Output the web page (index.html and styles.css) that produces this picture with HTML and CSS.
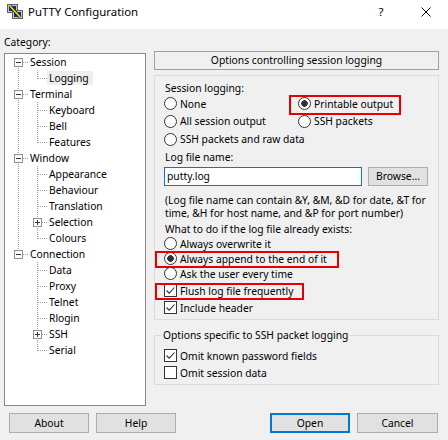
FILE: index.html
```html
<!DOCTYPE html>
<html>
<head>
<meta charset="utf-8">
<link rel="stylesheet" href="styles.css">
</head>
<body>
<div class="titlebar">
  <svg class="appicon" viewBox="0 0 16 16">
    <rect x="0.5" y="0.5" width="10" height="8" fill="#c8c8c8" stroke="#606060"/>
    <rect x="2" y="2" width="7" height="5" fill="#1a2a80"/>
    <rect x="5.5" y="6.5" width="10" height="8" fill="#c8c8c8" stroke="#606060"/>
    <rect x="7" y="8" width="7" height="5" fill="#1a2a80"/>
    <path d="M3 2 L13 13" stroke="#202020" stroke-width="3.2"/>
    <path d="M3 2 L13 13" stroke="#f5e000" stroke-width="1.6"/>
  </svg>
  <span class="title">PuTTY Configuration</span>
  <span class="tb-help">?</span>
  <span class="tb-close"><svg viewBox="0 0 10 10" width="10" height="10"><path d="M0.5 0.5 L9.5 9.5 M9.5 0.5 L0.5 9.5" stroke="#000" stroke-width="1"/></svg></span>
</div>

<div class="main">
  <div class="left">
    <div class="cat">Category:</div>
    <div class="tree">
      <div class="tr"><span class="c bx down"><span class="pm"></span></span><span class="lbl">Session</span></div>
      <div class="tr"><span class="c v"></span><span class="c l"></span><span class="lbl sel">Logging</span></div>
      <div class="tr"><span class="c bx both"><span class="pm"></span></span><span class="lbl">Terminal</span></div>
      <div class="tr"><span class="c v"></span><span class="c t"></span><span class="lbl">Keyboard</span></div>
      <div class="tr"><span class="c v"></span><span class="c t"></span><span class="lbl">Bell</span></div>
      <div class="tr"><span class="c v"></span><span class="c l"></span><span class="lbl">Features</span></div>
      <div class="tr"><span class="c bx both"><span class="pm"></span></span><span class="lbl">Window</span></div>
      <div class="tr"><span class="c v"></span><span class="c t"></span><span class="lbl">Appearance</span></div>
      <div class="tr"><span class="c v"></span><span class="c t"></span><span class="lbl">Behaviour</span></div>
      <div class="tr"><span class="c v"></span><span class="c t"></span><span class="lbl">Translation</span></div>
      <div class="tr"><span class="c v"></span><span class="c bx both"><span class="pm plus"></span></span><span class="lbl">Selection</span></div>
      <div class="tr"><span class="c v"></span><span class="c l"></span><span class="lbl">Colours</span></div>
      <div class="tr"><span class="c bx up"><span class="pm"></span></span><span class="lbl">Connection</span></div>
      <div class="tr"><span class="c"></span><span class="c t"></span><span class="lbl">Data</span></div>
      <div class="tr"><span class="c"></span><span class="c t"></span><span class="lbl">Proxy</span></div>
      <div class="tr"><span class="c"></span><span class="c t"></span><span class="lbl">Telnet</span></div>
      <div class="tr"><span class="c"></span><span class="c t"></span><span class="lbl">Rlogin</span></div>
      <div class="tr"><span class="c"></span><span class="c bx both"><span class="pm plus"></span></span><span class="lbl">SSH</span></div>
      <div class="tr"><span class="c"></span><span class="c l"></span><span class="lbl">Serial</span></div>
    </div>
  </div>

  <div class="right">
    <div class="ptitle">Options controlling session logging</div>
    <div class="group g1">
      <div class="lab13">Session logging:</div>
      <div class="rgrid">
        <label class="opt"><span class="rb"></span>None</label>
        <label class="opt hl hl-print"><span class="rb on"></span>Printable output</label>
        <label class="opt"><span class="rb"></span>All session output</label>
        <label class="opt"><span class="rb"></span>SSH packets</label>
        <label class="opt span2"><span class="rb"></span>SSH packets and raw data</label>
      </div>
      <div class="lab14 mt2">Log file name:</div>
      <div class="filerow">
        <div class="input">putty.log</div>
        <div class="btn browse">Browse...</div>
      </div>
      <div class="para">(Log file name can contain &amp;Y, &amp;M, &amp;D for date, &amp;T for<br>time, &amp;H for host name, and &amp;P for port number)</div>
      <div class="lab14 mt2">What to do if the log file already exists:</div>
      <div class="r15"><label class="opt"><span class="rb"></span>Always overwrite it</label></div>
      <div class="r15"><label class="opt hl hl-append"><span class="rb on"></span>Always append to the end of it</label></div>
      <div class="r15"><label class="opt"><span class="rb"></span>Ask the user every time</label></div>
      <div class="r17 mt1"><label class="opt hl hl-flush"><span class="cb on"><svg viewBox="0 0 11 11" width="11" height="11"><path d="M1.5 5.5 L4.2 8.2 L9.5 2.5" fill="none" stroke="#333" stroke-width="1.1"/></svg></span>Flush log file frequently</label></div>
      <div class="r17"><label class="opt"><span class="cb on"><svg viewBox="0 0 11 11" width="11" height="11"><path d="M1.5 5.5 L4.2 8.2 L9.5 2.5" fill="none" stroke="#333" stroke-width="1.1"/></svg></span>Include header</label></div>
    </div>
    <div class="group g2">
      <div class="legend">Options specific to SSH packet logging</div>
      <div class="r17 mt5"><label class="opt"><span class="cb on"><svg viewBox="0 0 11 11" width="11" height="11"><path d="M1.5 5.5 L4.2 8.2 L9.5 2.5" fill="none" stroke="#333" stroke-width="1.1"/></svg></span>Omit known password fields</label></div>
      <div class="r17"><label class="opt"><span class="cb"></span>Omit session data</label></div>
    </div>
  </div>
</div>

<div class="buttons">
  <div class="btn">About</div>
  <div class="btn ml7">Help</div>
  <div class="spacer"></div>
  <div class="btn default">Open</div>
  <div class="btn ml7 w81">Cancel</div>
</div>
</body>
</html>
```

FILE: styles.css
```css
* { box-sizing: border-box; }
html, body { margin: 0; padding: 0; }
body {
  width: 448px;
  height: 440px;
  overflow: hidden;
  background: #f0f0f0;
  font-family: "Noto Sans", "DejaVu Sans", sans-serif;
  font-size: 10.3px;
  color: #000;
  --dv: repeating-linear-gradient(to bottom, #a0a0a0 0 1px, transparent 1px 2px);
  --dh: repeating-linear-gradient(to right, #a0a0a0 0 1px, transparent 1px 2px);
}

/* title bar */
.titlebar {
  height: 29px;
  background: #fff;
  display: flex;
  align-items: flex-start;
  padding: 4px 0 0 7px;
}
.appicon { width: 16px; height: 16px; flex: none; margin-right: 5px; }
.title { flex: 1; font-size: 11.4px; line-height: 16px; }
.tb-help { width: 46px; text-align: center; font-size: 11.6px; line-height: 16px; }
.tb-close { width: 44px; display: flex; justify-content: center; padding-top: 3px; }

/* main */
.main { display: flex; gap: 8px; padding: 6px 9px 0 4px; }
.left { width: 142px; flex: none; }
.cat { height: 14px; line-height: 14px; }
.tree {
  margin-top: 4px;
  height: 353px;
  border: 1px solid #828790;
  background: #fff;
  padding-left: 4px;
}
.tr { display: flex; align-items: center; height: 16px; }
.c {
  width: 19px;
  height: 16px;
  flex: none;
  background-repeat: no-repeat;
}
.c.v { background-image: var(--dv); background-size: 1px 16px; background-position: 9px 0; }
.c.t { background-image: var(--dv), var(--dh); background-size: 1px 16px, 9px 1px; background-position: 9px 0, 10px 8px; }
.c.l { background-image: var(--dv), var(--dh); background-size: 1px 9px, 9px 1px; background-position: 9px 0, 10px 8px; }
.c.bx { display: flex; padding: 4px 0 0 5px; }
.c.bx.both { background-image: var(--dv), var(--dh); background-size: 1px 16px, 5px 1px; background-position: 9px 0, 14px 8px; }
.c.bx.down { background-image: var(--dv), var(--dh); background-size: 1px 8px, 5px 1px; background-position: 9px 8px, 14px 8px; }
.c.bx.up { background-image: var(--dv), var(--dh); background-size: 1px 8px, 5px 1px; background-position: 9px 0, 14px 8px; }
.pm {
  width: 9px;
  height: 9px;
  border: 1px solid #919191;
  background: linear-gradient(#333, #333) center / 5px 1px no-repeat, #fff;
}
.pm.plus {
  background: linear-gradient(#333, #333) center / 5px 1px no-repeat,
              linear-gradient(#333, #333) center / 1px 5px no-repeat, #fff;
}
.lbl { padding: 0 2px; line-height: 14px; white-space: nowrap; }
.lbl.sel { background: #eeeeee; padding-right: 4px; }

.right { width: 285px; flex: none; padding-top: 16px; }
.ptitle {
  height: 19px;
  border: 1px solid #a0a0a0;
  text-align: center;
  line-height: 17px;
}
.group { border: 1px solid #dcdcdc; }
.g1 { margin-top: 5px; height: 245px; padding: 6px 9px 0 9px; }
.g2 { margin-top: 15px; height: 50px; padding: 0 9px; }
.legend {
  width: max-content;
  margin: -8px 0 0 -3px;
  padding: 0 2px;
  line-height: 14px;
  background: #f0f0f0;
}

.lab13 { line-height: 13px; padding-left: 1px; }
.lab14 { line-height: 14px; padding-left: 1px; }
.mt1 { margin-top: 1px; }
.mt2 { margin-top: 2px; }
.mt5 { margin-top: 5px; }

.rgrid {
  display: grid;
  grid-template-columns: 134px auto;
  grid-template-rows: 17px 18px 18px;
  align-items: center;
  justify-items: start;
}
.span2 { grid-column: 1 / 3; }

.opt { display: inline-flex; align-items: center; gap: 3px; white-space: nowrap; line-height: 14px; }
.rb {
  width: 13px;
  height: 13px;
  border-radius: 50%;
  border: 1px solid #333;
  background: #fff;
  flex: none;
}
.rb.on { background: radial-gradient(circle, #333 0 3px, transparent 3.6px), #fff; }
.cb {
  width: 13px;
  height: 13px;
  border: 1px solid #333;
  background: #fff;
  flex: none;
  display: flex;
}
.r15 { height: 15px; display: flex; align-items: center; }
.r17 { height: 17px; display: flex; align-items: center; }

.hl { position: relative; }
.hl::after {
  content: "";
  position: absolute;
  border: 2px solid #e60000;
}
.hl-print::after { left: -9px; right: -8px; top: -2px; bottom: -4px; }
.hl-append::after { left: -9px; right: -12px; top: -1px; bottom: -2px; }
.hl-flush::after { left: -9px; right: -11px; top: -1px; bottom: -2px; }

.filerow { display: flex; gap: 6px; margin-top: 3px; }
.input {
  width: 198px;
  height: 19px;
  border: 1px solid #0078d7;
  background: #fff;
  padding-left: 2px;
  line-height: 17px;
}
.para { margin-top: 8px; line-height: 13px; white-space: nowrap; padding-left: 1px; }

.btn {
  width: 80px;
  height: 20px;
  border: 1px solid #adadad;
  background: #e1e1e1;
  text-align: center;
  line-height: 18px;
  flex: none;
}
.browse { width: 60px; height: 19px; line-height: 17px; }
.btn.default { border: 2px solid #0078d7; line-height: 16px; }
.ml7 { margin-left: 7px; }
.w81 { width: 81px; }
.buttons { display: flex; margin-top: 7px; padding: 0 10px 0 9px; }
.spacer { flex: 1; }
```
